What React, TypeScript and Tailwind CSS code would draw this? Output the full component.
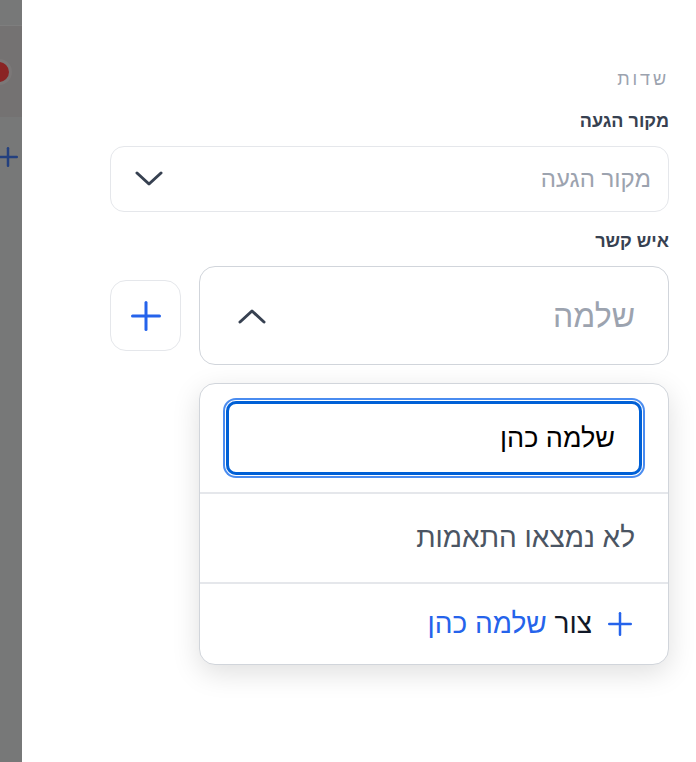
import React from 'react';

const font = { fontFamily: '"Liberation Sans", "DejaVu Sans", sans-serif' };

const Chevron: React.FC<{ up?: boolean }> = ({ up }) => (
  <svg width="28" height="16" viewBox="0 0 28 16" fill="none" stroke="#374151" strokeWidth="3" strokeLinecap="round" strokeLinejoin="round">
    {up ? <polyline points="2,14 14,3 26,14" /> : <polyline points="2,2 14,13 26,2" />}
  </svg>
);

const Plus: React.FC<{ size: number; stroke: number; color?: string }> = ({ size, stroke, color = '#2563eb' }) => (
  <svg width={size} height={size} viewBox={`0 0 ${size} ${size}`} stroke={color} strokeWidth={stroke} strokeLinecap="round">
    <line x1={size / 2} y1={stroke / 2} x2={size / 2} y2={size - stroke / 2} />
    <line x1={stroke / 2} y1={size / 2} x2={size - stroke / 2} y2={size / 2} />
  </svg>
);

export default function App() {
  return (
    <div className="flex w-[696px] h-[762px] overflow-hidden bg-white" style={font}>
      {/* dimmed page behind the drawer */}
      <div className="w-[22px] h-full bg-[#777878] overflow-hidden flex flex-col pt-[25px]">
        <div className="h-[92px] bg-[#747272] border-t border-[#7e7e7e] flex items-center">
          <div className="w-[20px] h-[20px] shrink-0 rounded-full bg-[#8a2424] ring-[3px] ring-[#7b7878] -ml-[11px]" />
        </div>
        <div className="mt-[30px] -ml-[2px]">
          <Plus size={20} stroke={2.5} color="#23407f" />
        </div>
      </div>

      <div dir="rtl" className="flex-1 h-full bg-white pr-[27px] pl-[88px] pt-[65px]">
        <div className="text-[18px] leading-[28px] text-[#9ca3af] tracking-[0.16em]">שדות</div>

        <div className="mt-[17px] text-[18px] leading-[22px] font-bold text-[#374151]">מקור הגעה</div>
        <div className="mt-[14px] h-[66px] rounded-[14px] border border-[#e5e7eb] flex items-center justify-between pr-[17px] pl-[24px]">
          <span className="text-[24px] text-[#9ca3af]">מקור הגעה</span>
          <Chevron />
        </div>

        <div className="mt-[18px] text-[18px] leading-[22px] font-bold text-[#374151]">איש קשר</div>
        <div className="mt-[14px] flex items-center gap-[18px]">
          <div className="flex-1 h-[99px] rounded-[16px] border-[1.5px] border-[#d1d5db] flex items-center justify-between pr-[33px] pl-[38px]">
            <span className="text-[32px] text-[#9ca3af]">שלמה</span>
            <Chevron up />
          </div>
          <button className="w-[71px] h-[71px] rounded-[16px] border border-[#e5e7eb] flex items-center justify-center">
            <Plus size={30} stroke={3} />
          </button>
        </div>

        <div className="mt-[18px] ml-[89px] rounded-[16px] border-[1.5px] border-[#d1d5db] bg-white shadow-[0_8px_28px_rgba(0,0,0,0.13)] overflow-hidden">
          <div className="px-[26px] pt-[17px] pb-[17px]">
            <div className="h-[74px] rounded-[10px] border-[3px] border-[#0060d6] shadow-[0_0_0_1px_#ffffff,0_0_0_3px_#4a8cf0] flex items-center pr-[24px]">
              <span className="text-[27px] text-black">שלמה כהן</span>
            </div>
          </div>
          <div className="h-[90px] border-t-2 border-[#e5e7eb] flex items-center pr-[33px]">
            <span className="text-[28px] text-[#4b5563]">לא נמצאו התאמות</span>
          </div>
          <div className="h-[82px] border-t-2 border-[#e5e7eb] flex items-center gap-[16px] pr-[36px]">
            <Plus size={24} stroke={2.5} />
            <span className="text-[28px] text-[#111827]">
              צור <span className="text-[#2563eb]">שלמה כהן</span>
            </span>
          </div>
        </div>
      </div>
    </div>
  );
}
